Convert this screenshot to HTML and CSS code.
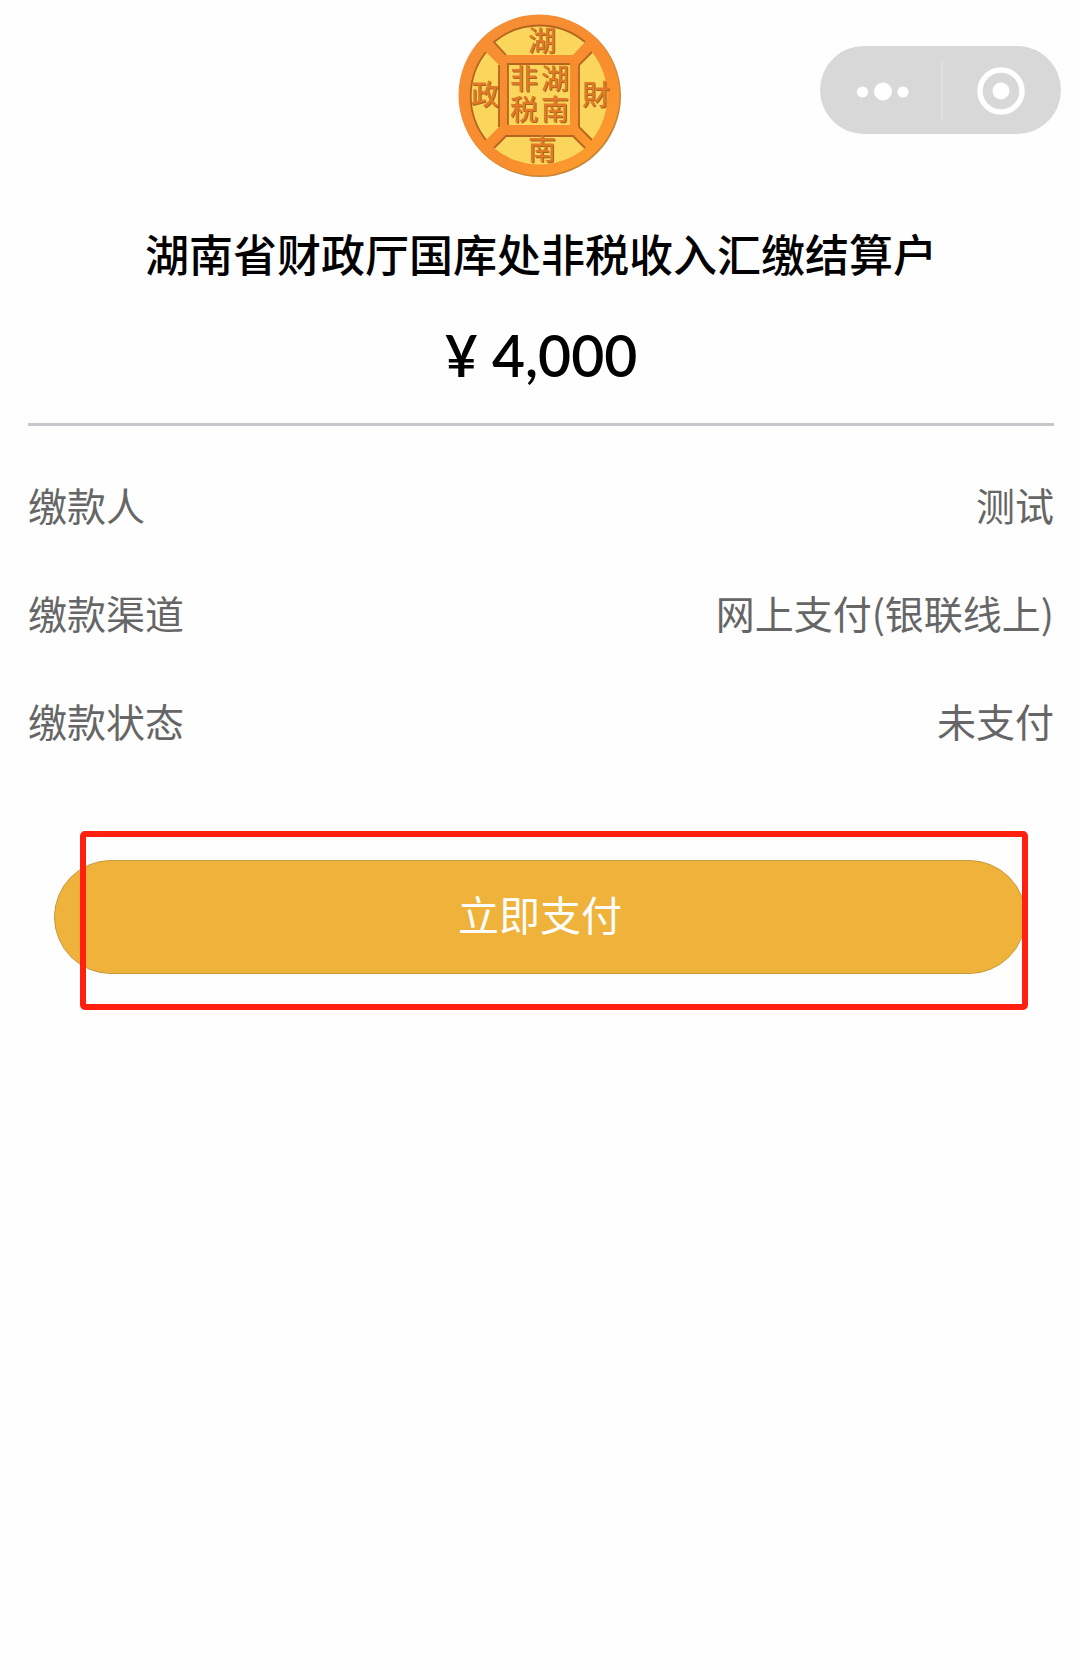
FILE: index.html
```html
<!DOCTYPE html>
<html lang="zh-CN">
<head>
<meta charset="utf-8">
<meta name="viewport" content="width=device-width, initial-scale=1">
<title>湖南非税缴款</title>
<link rel="stylesheet" href="styles.css">
</head>
<body>
<header class="topbar">
  <svg class="coin" viewBox="0 0 164 164" role="img" aria-label="湖南财政">
    <defs>
      <linearGradient id="rim" x1="0" y1="0" x2="1" y2="1">
        <stop offset="0" stop-color="#f58e35"/>
        <stop offset="0.6" stop-color="#f88d2e"/>
        <stop offset="1" stop-color="#ffa22c"/>
      </linearGradient>
    </defs>
    <circle cx="82" cy="82" r="81" fill="#c98436"/>
    <circle cx="81" cy="81" r="80.500" fill="url(#rim)"/>
    <g fill="#fbd65c">
      <path d="M36 28A71 71 0 0 1 127 28L115 41H48Z"/>
      <path d="M28 38L41 51V113L28 126A71 71 0 0 1 28 38Z"/>
      <path d="M134 38L121 51V113L134 126A71 71 0 0 0 134 38Z"/>
      <path d="M36 134L48 122H115L127 134A71 71 0 0 1 36 134Z"/>
      <rect x="50" y="50" width="62" height="61"/>
    </g>
    <g fill="none" stroke="#b5651f" stroke-width="1.800">
      <path d="M48 41L36 28A71 71 0 0 1 127 28"/>
      <path d="M28 126A71 71 0 0 1 28 38M41 51V113"/>
      <path d="M134 126L121 113V51L134 38"/>
      <path d="M36 134L48 122H115L127 134"/>
      <path d="M50 111V50H112"/>
    </g>
    <g class="coin-text">
      <text x="84" y="37">湖</text><text x="84" y="146">南</text>
      <text x="27" y="91">政</text><text x="138" y="91">財</text>
      <text x="66" y="75">非</text><text x="97" y="75">湖</text>
      <text x="66" y="106">税</text><text x="97" y="106">南</text>
    </g>
  </svg>
  <div class="capsule">
    <button class="capsule-button more" type="button" aria-label="更多">
      <svg width="54" height="48" viewBox="0 0 54 48" fill="#fff"><circle cx="6.500" cy="25" r="5.600"/><circle cx="27" cy="24.500" r="9"/><circle cx="47" cy="25" r="5.600"/></svg>
    </button>
    <button class="capsule-button close" type="button" aria-label="关闭">
      <svg width="48" height="48" viewBox="0 0 48 48"><circle cx="24" cy="24" r="21" fill="none" stroke="#fff" stroke-width="5.500"/><circle cx="24" cy="24" r="8.500" fill="#fff"/></svg>
    </button>
  </div>
</header>
<main class="page">
  <h1 class="payee">湖南省财政厅国库处非税收入汇缴结算户</h1>
  <p class="amount">¥ 4,000</p>
  <dl class="details">
    <div class="row"><dt>缴款人</dt><dd>测试</dd></div>
    <div class="row"><dt>缴款渠道</dt><dd>网上支付(银联线上)</dd></div>
    <div class="row"><dt>缴款状态</dt><dd>未支付</dd></div>
  </dl>
  <div class="action">
    <button class="pay" type="button">立即支付</button>
    <div class="highlight"></div>
  </div>
</main>
</body>
</html>
```
FILE: styles.css
```css
* {
  box-sizing: border-box;
}

body {
  min-height: 100vh;
  margin: 0;
  background: #fefefe;
  color: #000;
  font-family: "Noto Sans CJK SC", sans-serif;
}

.topbar {
  display: grid;
  grid-template-columns: 1fr auto 1fr;
  padding: 14px 19px 0;
}

.coin {
  grid-column: 2;
  display: block;
  width: 164px;
  height: 164px;
}

.coin-text {
  font-family: "Noto Sans CJK TC", sans-serif;
  font-size: 28px;
  font-weight: 500;
  text-anchor: middle;
  fill: #e07a28;
  filter: drop-shadow(1px 1px 0 #a8641c);
}

.capsule {
  justify-self: end;
  display: grid;
  grid-template-columns: 1fr 1fr;
  width: 241px;
  height: 88px;
  margin-top: 32px;
  border-radius: 44px;
  background: #d8d8d8;
}

.capsule-button {
  display: flex;
  align-items: center;
  justify-content: center;
  padding: 0;
  border: 0;
  background: none;
}

.more {
  padding: 2px 0 0 6px;
}

.close {
  padding-top: 2px;
  background: linear-gradient(#dedede, #dedede) left center / 2px 60px no-repeat;
}

.page {
  padding: 0 26px 0 28px;
}

.payee {
  margin: 43px 0 0;
  font-size: 44px;
  line-height: 64px;
  font-weight: 500;
  text-align: center;
}

.amount {
  margin: 0;
  padding: 28px 0 26px;
  border-bottom: 3px solid #c7c6cd;
  font-family: Lato, "Noto Sans CJK SC", sans-serif;
  font-size: 57px;
  line-height: 84px;
  font-weight: 600;
  text-align: center;
}

.details {
  margin: 24px 0 0;
  color: #666;
  font-size: 39px;
  line-height: 58px;
}

.row {
  display: flex;
  align-items: center;
  justify-content: space-between;
  height: 108px;
}

.row dd {
  margin: 0;
}

.action {
  position: relative;
  margin-top: 57px;
  padding: 29px 28px 36px 26px;
}

.pay {
  display: block;
  width: 100%;
  height: 114px;
  padding: 0 0 8px;
  border: 1px solid #c89a40;
  border-radius: 57px;
  background: #efb33c;
  color: #fff;
  font: inherit;
  font-size: 41px;
  line-height: 60px;
}

.highlight {
  position: absolute;
  inset: 0 26px 0 52px;
  border: 6px solid #ff2010;
  border-radius: 5px;
  pointer-events: none;
}
```
